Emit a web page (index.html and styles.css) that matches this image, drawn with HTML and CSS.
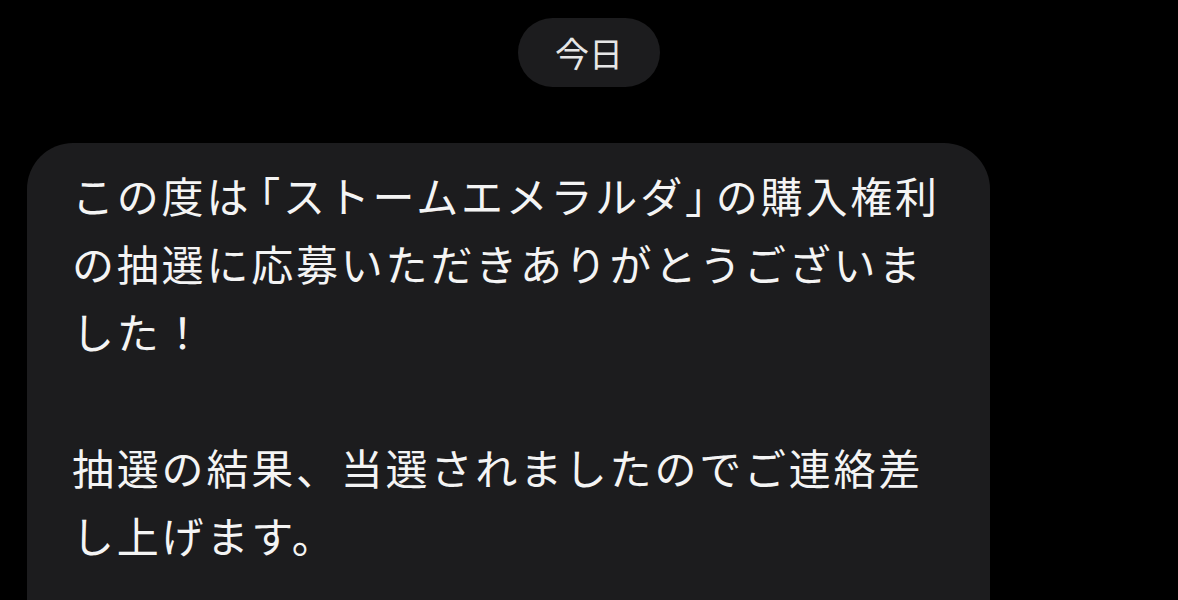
FILE: index.html
```html
<!DOCTYPE html>
<html lang="ja">
<head>
    <meta charset="UTF-8">
    <title>メッセージ</title>
    <link rel="stylesheet" href="styles.css">
</head>
<body>
    <div class="chat">
        <!-- 日付 -->
        <div class="date-row">
            <span class="date-pill">今日</span>
        </div>

        <!-- 受信メッセージ -->
        <div class="bubble">
            <p>この度は<span class="kakko open">「</span>ストームエメラルダ<span class="kakko close">」</span>の購入権利<br>の抽選に応募いただきありがとうございま<br>した！</p>
            <p>抽選の結果、当選されましたのでご連絡差<br>し上げます。</p>
        </div>
    </div>
</body>
</html>
```

FILE: styles.css
```css
* { box-sizing: border-box; margin: 0; padding: 0; }
body {
    font-family: "Noto Sans CJK JP", "Noto Sans", sans-serif;
    background-color: #000;
    color: #f4f4f4;
    overflow: hidden;
}

.chat { padding: 18px 0 0 27px; width: 990px; }
.date-row { display: flex; justify-content: center; margin-left: -27px; width: 1178px; }
.date-pill { display: inline-flex; align-items: center; justify-content: center; width: 142px; height: 69px; border-radius: 35px; background-color: #1c1c1e; color: #e6e6e6; font-size: 34px; }

.bubble { margin-top: 56px; width: 963px; padding: 18px 40px 80px 45px; background-color: #1c1c1e; border-radius: 46px; font-size: 42px; line-height: 68px; letter-spacing: 2.8px; white-space: nowrap; }
.bubble p + p { margin-top: 68px; }
/* 括弧は半角幅で詰める */
.kakko { font-feature-settings: "halt" 1; }
.open { margin-left: 8px; }
.close { margin-right: 7px; }
```
